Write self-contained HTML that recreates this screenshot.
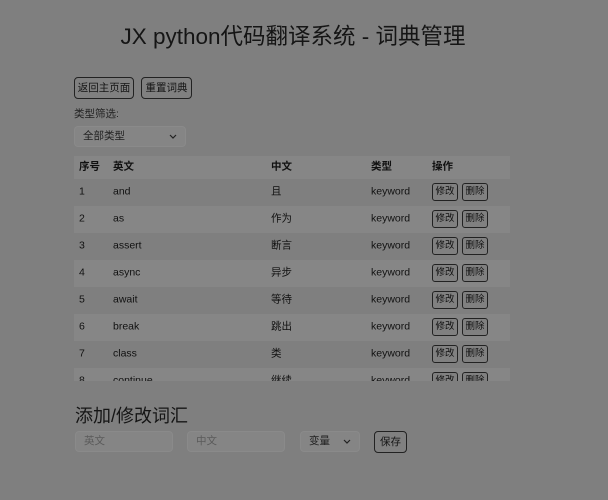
<!DOCTYPE html>
<html><head><meta charset="utf-8"><style>
*{box-sizing:border-box;margin:0;padding:0}
body{width:608px;height:500px;overflow:hidden;background:#7f7f7f;font-family:"Liberation Sans","Noto Sans CJK SC",sans-serif;color:#111;position:relative}
.a{position:absolute;line-height:1}
h1{position:absolute;left:0;width:586px;top:24px;text-align:center;font-size:22.5px;line-height:26px;font-weight:normal;color:#151515;white-space:nowrap}
.btn{position:absolute;border:1px solid #222;border-radius:4px;background:#808080;font-size:10.5px;line-height:1;display:flex;align-items:center;justify-content:center;color:#151515}
.sel{position:absolute;background:#858585;border:1px solid #8a8a8a;border-radius:4px;font-size:10.5px;line-height:1;padding-left:8px;display:flex;align-items:center;color:#222}
.sel svg{position:absolute;right:8px;top:50%;margin-top:-3px}
.inp{position:absolute;background:#858585;border:1px solid #8a8a8a;border-radius:4px;font-size:10.5px;line-height:1;padding-left:8px;display:flex;align-items:center;color:#5a5a5a}
.wrap{position:absolute;left:74px;top:156px;width:436px;height:225px;overflow:hidden}
.row{height:27px;position:relative;font-size:10.5px;line-height:1}
.row.h{height:23px;background:#868686;font-weight:bold}
.row.e{background:#868686}
.row span{position:absolute;top:50%;transform:translateY(-60%)}
.sb{position:absolute;top:4px;height:18px;width:26px;border:1px solid #222;border-radius:3px;font-size:9.5px;line-height:1;display:flex;align-items:center;justify-content:center;background:#808080}
</style></head><body>
<h1>JX python代码翻译系统 - 词典管理</h1>
<div class="btn" style="left:74px;top:77px;width:60px;height:22px">返回主页面</div>
<div class="btn" style="left:141px;top:77px;width:51px;height:22px">重置词典</div>
<div class="a" style="left:74px;top:109px;font-size:10.5px;color:#222">类型筛选:</div>
<div class="sel" style="left:74px;top:126px;width:112px;height:21px">全部类型<svg width="8" height="6"><path d="M1 1L4 4L7 1" stroke="#222" fill="none" stroke-width="1.2"/></svg></div>
<div class="wrap">
<div class="row h"><span style="left:5px">序号</span><span style="left:39px">英文</span><span style="left:197px">中文</span><span style="left:297px">类型</span><span style="left:358px">操作</span></div>
<div class="row"><span style="left:5px">1</span><span style="left:39px">and</span><span style="left:197px">且</span><span style="left:297px">keyword</span><div class="sb" style="left:358px">修改</div><div class="sb" style="left:388px">删除</div></div>
<div class="row e"><span style="left:5px">2</span><span style="left:39px">as</span><span style="left:197px">作为</span><span style="left:297px">keyword</span><div class="sb" style="left:358px">修改</div><div class="sb" style="left:388px">删除</div></div>
<div class="row"><span style="left:5px">3</span><span style="left:39px">assert</span><span style="left:197px">断言</span><span style="left:297px">keyword</span><div class="sb" style="left:358px">修改</div><div class="sb" style="left:388px">删除</div></div>
<div class="row e"><span style="left:5px">4</span><span style="left:39px">async</span><span style="left:197px">异步</span><span style="left:297px">keyword</span><div class="sb" style="left:358px">修改</div><div class="sb" style="left:388px">删除</div></div>
<div class="row"><span style="left:5px">5</span><span style="left:39px">await</span><span style="left:197px">等待</span><span style="left:297px">keyword</span><div class="sb" style="left:358px">修改</div><div class="sb" style="left:388px">删除</div></div>
<div class="row e"><span style="left:5px">6</span><span style="left:39px">break</span><span style="left:197px">跳出</span><span style="left:297px">keyword</span><div class="sb" style="left:358px">修改</div><div class="sb" style="left:388px">删除</div></div>
<div class="row"><span style="left:5px">7</span><span style="left:39px">class</span><span style="left:197px">类</span><span style="left:297px">keyword</span><div class="sb" style="left:358px">修改</div><div class="sb" style="left:388px">删除</div></div>
<div class="row e"><span style="left:5px">8</span><span style="left:39px">continue</span><span style="left:197px">继续</span><span style="left:297px">keyword</span><div class="sb" style="left:358px">修改</div><div class="sb" style="left:388px">删除</div></div>
</div>
<div class="a" style="left:75px;top:407px;font-size:18px;color:#151515">添加/修改词汇</div>
<div class="inp" style="left:75px;top:431px;width:98px;height:21px">英文</div>
<div class="inp" style="left:187px;top:431px;width:98px;height:21px">中文</div>
<div class="sel" style="left:300px;top:431px;width:60px;height:21px">变量<svg width="8" height="6"><path d="M1 1L4 4L7 1" stroke="#222" fill="none" stroke-width="1.2"/></svg></div>
<div class="btn" style="left:374px;top:431px;width:33px;height:22px">保存</div>
</body></html>
